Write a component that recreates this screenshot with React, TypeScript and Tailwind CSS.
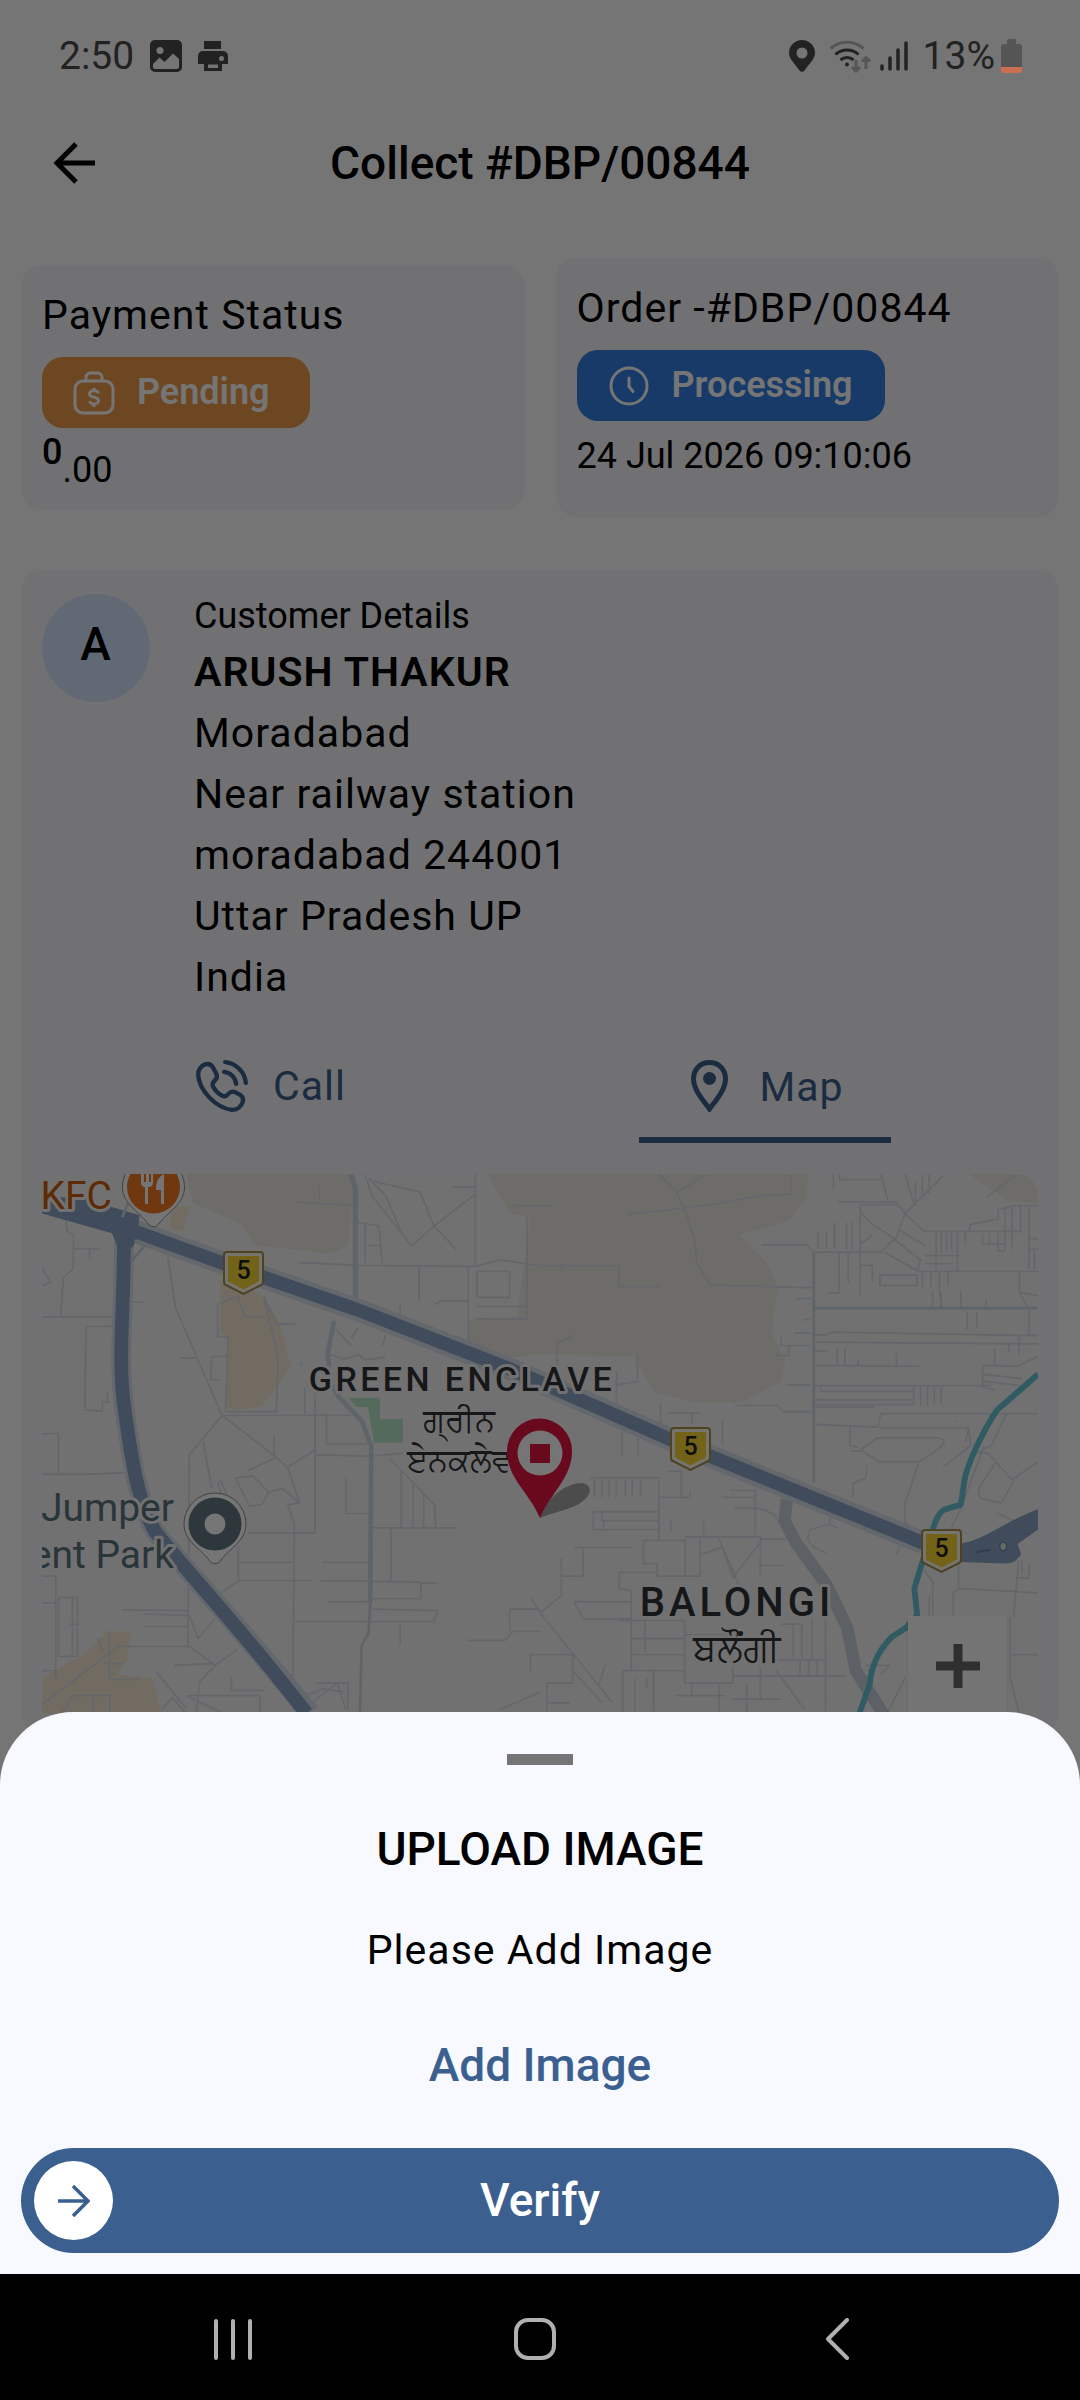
import type { ReactNode } from 'react'

const address = ['Moradabad', 'Near railway station', 'moradabad 244001', 'Uttar Pradesh UP', 'India']

function StatusBar() {
  return (
    <div className="relative z-20 flex h-[112px] items-center justify-between pl-[59px] pr-[58px] text-[39px] leading-[48px] text-[#222222]">
      <div className="flex items-center">
        <span>2:50</span>
        <svg viewBox="0 0 32 32" className="ml-4 size-8" aria-hidden="true">
          <path fillRule="evenodd" fill="currentColor" d="M5 0h22a5 5 0 0 1 5 5v22a5 5 0 0 1-5 5H5a5 5 0 0 1-5-5V5a5 5 0 0 1 5-5Zm5 7a3.5 3.5 0 1 0 0 7 3.500 3.500 0 0 0 0-7ZM3 24v3a2 2 0 0 0 2 2h22a2 2 0 0 0 2-2v-8l-6-5.500-8.500 8.500-5-4.500Z" />
        </svg>
        <svg viewBox="0 0 30 30" className="ml-4 size-[30px]" aria-hidden="true">
          <path fillRule="evenodd" fill="currentColor" d="M6 0h17v8H6ZM5 10h20a5 5 0 0 1 5 5v8h-6v7H6v-7H0v-8a5 5 0 0 1 5-5Zm18.500 5a2.500 2.500 0 1 0 0 5 2.500 2.500 0 0 0 0-5ZM10 23.500v3.500h10v-3.500Z" />
        </svg>
      </div>
      <div className="flex items-center">
        <svg viewBox="0 0 26 32" className="h-8 w-[26px]" aria-hidden="true">
          <path fillRule="evenodd" fill="currentColor" d="M13 0a13 13 0 0 1 13 13c0 6-6 11-10.500 17.500a3 3 0 0 1-5 0C6 24 0 19 0 13A13 13 0 0 1 13 0Zm0 7.500a5.500 5.500 0 1 0 0 11 5.500 5.500 0 0 0 0-11Z" />
        </svg>
        <svg viewBox="0 0 42 34" className="ml-[14px] h-[34px] w-[42px]" fill="none" strokeWidth="3" aria-hidden="true">
          <path d="M1.500 9.500a25 25 0 0 1 33 0" stroke="#555555" />
          <path d="M6.500 15.500a17 17 0 0 1 23 0M11.500 21a10 10 0 0 1 13 0" stroke="currentColor" />
          <circle cx="18" cy="25.500" r="2" fill="currentColor" />
          <path d="M27 21v11m-4-4 4 4 4-4M37 30V18.500m-4 4 4-4 4 4" stroke="#555555" />
        </svg>
        <svg viewBox="0 0 28 32" className="ml-[9px] h-8 w-7" stroke="currentColor" strokeWidth="3.500" strokeLinecap="round" aria-hidden="true">
          <path d="M2 26v3M10 18v11M18 10v19M26 3v26" />
        </svg>
        <span className="ml-[15px]">13%</span>
        <svg viewBox="0 0 21 34" className="ml-[6px] h-[34px] w-[21px]" aria-hidden="true">
          <path d="M6 1.500A1.500 1.500 0 0 1 7.500 0h6A1.500 1.500 0 0 1 15 1.500V5h3a3 3 0 0 1 3 3v20H0V8a3 3 0 0 1 3-3h3Z" fill="#555555" />
          <path d="M0 28h21v3a3 3 0 0 1-3 3H3a3 3 0 0 1-3-3Z" fill="#cc6e50" />
        </svg>
      </div>
    </div>
  )
}

function Badge({ className, icon, children }: { className: string; icon: ReactNode; children: ReactNode }) {
  return (
    <div className={`mt-[11px] flex h-[71px] w-fit min-w-[268px] items-center gap-[22px] rounded-[21px] pl-[31px] pr-8 text-[36px] font-semibold tracking-normal text-white ${className}`}>
      {icon}
      <span>{children}</span>
    </div>
  )
}

function MoneyBagIcon() {
  return (
    <svg viewBox="0 0 42 44" className="h-11 w-[42px]" fill="none" stroke="currentColor" strokeWidth="3" aria-hidden="true">
      <rect x="2" y="10" width="38" height="32" rx="8" />
      <path d="M13 10V6.500A4.500 4.500 0 0 1 17.500 2h7A4.500 4.500 0 0 1 29 6.500V10" />
      <path d="M25.500 22.500c-.5-2-2.500-3-4.500-3s-4.500 1-4.500 3.500c0 4.500 9 2 9 6.500 0 2.500-2.500 3.500-4.500 3.500s-4-1-4.500-3M21 17v3M21 33v3" />
    </svg>
  )
}

function ClockIcon() {
  return (
    <svg viewBox="0 0 42 42" className="size-[42px]" fill="none" stroke="currentColor" strokeWidth="3" strokeLinecap="round" aria-hidden="true">
      <circle cx="21" cy="21" r="18" />
      <path d="M21 13v8.500l4 5" />
    </svg>
  )
}

function Shield({ x, y }: { x: number; y: number }) {
  return (
    <g transform={`translate(${x} ${y})`}>
      <path d="M4 1h33a3 3 0 0 1 3 3v27a3 3 0 0 1-2 3l-17.500 9L3 34a3 3 0 0 1-2-3V4a3 3 0 0 1 3-3Z" fill="#fffdf0" stroke="#a8904a" strokeWidth="2" />
      <path d="M5 5h31v25.500l-15.500 8L5 30.500Z" fill="#fbd835" />
      <text x="20.500" y="28" textAnchor="middle" fontSize="25" fontWeight="500" fill="#222">5</text>
    </g>
  )
}

function MapView() {
  return (
    <div className="relative h-[560px] overflow-hidden rounded-tr-[21px] bg-[#f8f7f7]">
      <svg viewBox="0 0 996 560" preserveAspectRatio="xMidYMin slice" className="h-full w-full" role="img" aria-label="Map of Green Enclave and Balongi">
        <g transform="translate(-42 -14) scale(.3444 .3571)" fill="none" strokeLinejoin="round">
          {/* land use */}
          <path d="M540 30H1030L1010 240 960 262 740 240 700 180 560 120ZM1410 30H2350L2340 110 2290 170 2150 210 2230 290 2260 360 2240 480 2280 560 2270 620 2150 680H2020L1900 650 1840 550 1560 545 1470 555 1360 520V450L1500 440 1540 160 1480 150ZM2800 30H3020V125L2920 110Z" fill="#f0ece2" />
          <path d="M640 340H700L770 390 810 450 845 580 760 690 690 700 655 690 660 500 640 480ZM500 130H550L530 200 490 190ZM122 1450 250 1380 310 1320 380 1320 370 1400 340 1440 440 1450 470 1550H122Z" fill="#f7ead3" />
          <path d="M1012 666H1103V726H1170V792H1086L1068 692H1035Z" fill="#b7e6c8" />
          {/* side streets, west */}
          <g stroke="#d9dfe9" strokeWidth="5">
            <path d="M190 160 195 200 214 210 212 305 184 330 176 440M122 440H328M216 248H288M260 248V278M122 302 148 342 122 352M328 466H250L246 700 296 703 298 678H320M312 678V646M122 766H170V880M122 880 250 880 400 875M487 270 510 415 645 715 760 800 835 860M520 555H568M645 715H1020M645 715 550 825 546 1365M590 790 615 920M632 405 632 495H662L655 705H802L808 555 765 380M632 405 690 380 710 440H765M765 380 802 460H858M385 398H415M614 550H658M614 550 612 615H640M796 770V835L720 870M683 890 735 885 780 930 760 965 725 970 683 890M780 930 820 920 870 960 835 965M835 860 870 960M835 860 915 812M835 965 855 1020 850 1480M720 1045H912M915 640V1045M915 825 1070 830 1240 815M948 710V795H1070M1005 890V990H1068M1130 835 1262 965 1265 1028M1070 1030H1328M1135 1030V1180M1165 870V1028M1200 900V1028M1230 930V1028M935 1127H1070M695 1127H850M692 1080V1178H908M930 1178 1222 1182V1228H1080M950 1237H1070M855 1293H1260L1272 1262 1080 1258M1225 1185H1268M630 1220 692 1178M355 1260 545 1262M415 1272 548 1275M418 1307H545M345 1362H550L625 1415 690 1370M345 1362 122 1525M505 1415 620 1410M575 1340 625 1285M550 1275 575 1340M625 1415 580 1460 570 1550M640 895 660 940M632 900 650 960M122 1165H162V1455M122 1240H162M170 1225H225V1390H170ZM210 1225V1385M200 1300H222M318 1320V1455H405M300 1410H360M285 1340 300 1380M122 1430H160M270 1500H320V1550M180 1550 210 1500H270V1550M455 1435 540 1535M470 1540 500 1505 540 1550M540 1500H755V1550M650 1550 540 1500M672 1445V1485H770M885 1535 980 1465 1005 1540M920 1465H1010M930 1480 1000 1490" />
            <path d="M865 117 1025 128M928 80V120M870 287 1040 295 1380 298 1450 280 1568 296M1060 40 1080 100 1170 210M1085 60 1220 90 1260 185 1195 240 1168 208 1120 100 1070 50M1260 185 1375 100M1260 185 1325 250M1060 175V290M1040 175 1100 185 1110 290M1068 240H1100M1380 40V298M1315 75H1378M1360 298V525M1217 298V395M1162 405V440M1260 405 1280 395H1360M1385 312H1480V385H1385ZM1380 445H1530V160M1385 410H1530M1495 128H1568M970 470 1020 520M1040 470 1020 500M1110 520 1120 490M960 545 1000 558 1040 545 1060 560 1120 552M1225 470C1240 460 1260 465 1268 490M875 562V578M885 640V710M1162 1300V1355M1055 1345" />
            <path d="M1355 1345H1465L1490 1320H1568M1480 1320V1258H1568M1540 1430V1385H1568M1540 1228 1568 1265M1450 1540 1568 1490M1010 1465V1540M890 1500 940 1480" />
          </g>
          {/* side streets, east */}
          <g transform="translate(1568 0)" stroke="#d9dfe9" strokeWidth="5">
            <path d="M345 40 398 92 430 165 450 230 455 290 495 350 790 358M398 92 480 40M255 152 500 125 640 100 728 95V40M0 296H230V355H348M58 290 68 315M0 128H38M643 238H775L795 260M50 575V515L100 490M283 545V620L225 630M222 590V710M565 687H690L705 705H785M718 630H785M700 495V520H785M683 548H722V520M737 485H785M762 447H785M740 388H785M372 708H465M442 708V740M530 728V800M238 760V830M285 740V830M350 680V740" />
            <path d="M870 40V55H985M852 40V82M865 117H1040M990 40 1012 120M1060 40 1075 90 1085 120M1110 40V100M1130 40V95M1090 60V130M1170 45 1060 150 1035 215 990 258H790M930 125H1040L1065 155 1115 200H1400M930 125V380M807 198V250M832 198V250M855 175V250M890 175V250M905 175V250M930 145 965 180 1020 215 1105 280 1095 310 1000 258M1040 195 1120 240M930 235 965 210M868 260V372H835M895 260V345M930 295H965V340M987 322H1095V352H987ZM1095 312H1446M1110 315V355M1135 315V358M1160 315V385M1185 315V350M1212 200V310M1150 200V312M1165 200V258M1180 200V255M1195 200V252M1235 200V240M1118 268H1220M1118 290H1200M1245 200 1250 180 1330 165V140L1380 128H1446M1350 130V255M1370 130V250M1395 130V205M1420 130V305M1285 205V235H1350M1305 205V240M1330 205V255H1350M1420 220H1446M1420 250H1446M1435 255V305M1140 368V415M1165 368V415M1222 368V415M1295 390V415M1240 425V475M1268 425V470M1392 315V370L1420 420V490M1392 370 1446 380M1295 105 1385 40" />
            <path d="M790 490H830L850 482 1446 492M790 510 1446 515M790 535H835M863 525V575M885 525V575M790 575 1100 578M920 578 925 560M1035 540V578M1320 530V575M1362 515V540M1390 490V545M1446 550 1385 578 1285 575V635L1320 645M1285 600 1400 612M1290 620 1395 632M790 632H1310M1085 632V685H790M815 632V648H1085M790 672H1085M1105 635V688M1125 635V688M1145 635V688M1165 635V688M790 692H970M790 740 980 748 990 710H1446M900 748V800L925 805M900 815H935L985 845 1100 845C1180 800 1190 780 1150 778H980L930 812M985 750H1245L1235 790M1210 735V728M1245 750 1250 800 1170 860M1100 845 1075 920 1060 960V1015L1100 1050M908 945 910 905 945 890 950 855M842 990V1020L785 1035C770 1060 775 1080 830 1100M842 1020 865 1032M1035 1105 1060 1045M1355 710 1310 800 1270 820 1300 820M1300 820 1370 895 1446 845M1325 845 1280 910C1260 950 1280 950 1340 960L1375 900M1290 800 1220 980 1190 1040M1325 988 1375 1010" />
            <path d="M145 890H345V1065M158 890V945M180 895V945M200 895V945M222 895V945M248 895V940M268 895V940M292 895V940M345 945H430M410 870V945M370 872H408M435 930V948M155 985H345M155 985V1035H345M180 985V1010H345M185 1010V1035M550 925H625V1050M530 945H620M565 975H625M625 975C680 980 700 1010 715 1050M380 1040V1010M475 1010V1050M422 1055H640V1168M422 1055V1165M640 1062H715M300 1065H422M300 1065V1130H340V1165H422M465 1060V1165H422M465 1105 530 1085 560 1150 580 1200M520 1060 560 1170 640 1070M635 1135H710M230 1155H335M230 1155V1200L265 1205M100 1085H270M125 1085V1165H62V1220L0 1268M62 1165V1115M100 1237H265M100 1237 125 1285H265M0 1268 210 1520M265 1205V1430M230 1290H420V1465M265 1340H420M305 1290V1380M265 1385H420M0 1385H95V1465H20V1545M95 1430 180 1520M190 1415 170 1470M240 1430H420M240 1430V1545M275 1450V1545M310 1450V1480M330 1430V1545M420 1330H560M395 1500H540M420 1465H560M440 1465V1500M520 1470V1545M560 1345V1465M560 1445H890M700 1300H760V1395M735 1300V1395M790 1285V1395M829 1395V1545M660 1400H829M829 1285V1395M685 1430 770 1540M640 1420V1510M755 1400V1445M780 1400V1445M805 1400V1445M560 1510H700M600 1465V1545M20 1520H88M945 1415H1015L990 1440M950 1430 970 1420M1060 1450 1010 1545M1200 1275V1210L1220 1200 1446 1212M1215 1120V1200M1130 1220V1280M1115 1150 1140 1180V1275M1390 1120 1375 1280M1390 1170H1420V1130M1365 1385H1446M1365 1280V1450L1390 1545M1400 1120V1160" />
          </g>
          {/* secondary roads */}
          <g stroke="#d0d9e5">
            <path d="M1018 40 1032 80V395" strokeWidth="16" />
            <path d="M970 450 952 540 956 620 985 665 1050 730 1078 800 1075 1240" strokeWidth="14" />
            <path d="M1075 1240 1070 1325 1050 1360 1045 1550M2363 905V260M2363 415H3014" strokeWidth="8" />
            <path d="M2285 950 2278 1010 2310 1070 2400 1190 2460 1310 2485 1430 2570 1560" strokeWidth="36" stroke="#cbd3df" />
          </g>
          {/* river */}
          <path d="M3014 600 2895 700C2850 765 2805 860 2800 900L2790 965 2740 980C2710 1000 2705 1060 2680 1120L2655 1200 2663 1275 2630 1310 2590 1335C2545 1380 2530 1420 2525 1470L2495 1550" stroke="#6bc6d6" strokeWidth="17" />
          {/* highways */}
          <path d="M350 185 650 290 1040 420 1480 585 2000 805 2680 1072" stroke="#dbe1ea" strokeWidth="64" />
          <path d="M360 220C362 400 340 560 362 700 385 860 400 950 450 1040 530 1140 690 1300 900 1550" stroke="#dbe1ea" strokeWidth="58" />
          <path d="M122 120 350 185 650 290 1040 420 1480 585 2000 805 2680 1072" stroke="#8ba5c9" strokeWidth="38" />
          <path d="M360 200C362 400 340 560 362 700 385 860 400 950 450 1040 530 1140 690 1300 890 1550" stroke="#8ba5c9" strokeWidth="40" />
          <path d="M122 100 250 110 405 155 400 215 385 245 340 240 325 205 122 150ZM2560 1025 2680 1072 2780 1075C2850 1070 2900 1020 3014 978V1035L2955 1075 2965 1105C2950 1125 2940 1130 2915 1130L2790 1126 2670 1088Z" fill="#8ba5c9" />
          <ellipse cx="2913" cy="1082" rx="10" ry="12" fill="#d3ece0" stroke="#7088a8" strokeWidth="4" />
          <path d="M2835 1098 2875 1092" stroke="#7088a8" strokeWidth="6" />
          <path d="M390 225 420 240 380 285M355 160 372 120" stroke="#d0d9e5" strokeWidth="8" />
        </g>

        <Shield x={181} y={77} />
        <Shield x={628} y={253} />
        <Shield x={879} y={355} />

        <g stroke="#f8f7f7" strokeWidth="6" strokeLinejoin="round" paintOrder="stroke">
          <g fontSize="39" textAnchor="end">
            <text x="70" y="35" fill="#cb5c0c">KFC</text>
            <g fill="#5d747f">
              <text x="132" y="347">Jumper</text>
              <text x="132" y="394">ent Park</text>
            </g>
          </g>
          <g fill="#303437" fontWeight="500" textAnchor="middle">
            <text x="420" y="217" fontSize="34" className="tracking-widest">GREEN ENCLAVE</text>
            <text x="695" y="442" fontSize="40" className="tracking-widest">BALONGI</text>
          </g>
          <g fill="#303437" textAnchor="middle" fontSize="32" fontWeight="500">
            <text x="417" y="257">ਗ੍ਰੀਨ</text>
            <text x="417" y="297">ਏਨਕਲੇਵ</text>
            <text x="694" y="487" fontSize="38">ਬਲੌਂਗੀ</text>
          </g>
        </g>

        {/* restaurant */}
        <path d="M80.500 13a31 31 0 1 1 62 0c0 17-16 24-25 36-3 5-9 5-12 0-9-12-25-19-25-36Z" fill="#fff" stroke="#8f8f8f" />
        <circle cx="111.500" cy="13" r="26.500" fill="#f37a1f" />
        <path d="M99 0v8c0 4 2 5 4 5v17h3V13c3 0 5-1 5-5V0h-2v8h-2V0h-3v8h-2V0ZM122 0c-6 3-8 8-8 16h5v14h3Z" fill="#fff" />
        {/* park */}
        <path d="M142 350a31 31 0 1 1 62 0c0 17-16 24-25 36-3 5-9 5-12 0-9-12-25-19-25-36Z" fill="#fff" stroke="#8f8f8f" />
        <circle cx="173" cy="350" r="18.500" fill="none" stroke="#647a84" strokeWidth="16" />
        {/* destination */}
        <path d="M498 344C505 322 525 309 540 309c12 2 10 14-5 22-10 5-25 8-37 13Z" fill="#7a7a7a" opacity=".65" />
        <path d="M498 344C487 318 465 304 465 277a32.500 32.500 0 1 1 65 0c0 27-21 41-32 67Z" fill="#e5143f" />
        <circle cx="498" cy="279" r="22.500" fill="#fff" />
        <path d="M488 270h20v19h-20Z" fill="#e5143f" />
      </svg>
      <button type="button" aria-label="Zoom in" className="absolute right-[31px] top-[442px] flex h-[118px] w-[99px] justify-center bg-[#fdfdfd] pt-7 text-[#666666] shadow-sm">
        <svg viewBox="0 0 44 44" className="size-11" aria-hidden="true">
          <path d="M22 0v44M0 22h44" stroke="currentColor" strokeWidth="9" />
        </svg>
      </button>
    </div>
  )
}

function OrderPage() {
  return (
    <main className="px-[21px] text-[41px] leading-[61px] tracking-wide">
      <header className="grid h-[102px] grid-cols-[1fr_auto_1fr] items-center tracking-normal">
        <button type="button" aria-label="Back" className="ml-8 w-fit">
          <svg viewBox="0 0 42 42" className="size-[42px]" fill="none" stroke="currentColor" strokeWidth="5" aria-hidden="true">
            <path d="M42 21H4M23 2 4 21l19 19" />
          </svg>
        </button>
        <h1 className="text-[46px] font-medium">Collect #DBP/00844</h1>
      </header>

      <div className="mt-11 grid grid-cols-2 items-center gap-[31px]">
        <section className="rounded-[21px] bg-[#f6f6fa] px-[21px] py-5">
          <h2>Payment Status</h2>
          <Badge className="bg-[#ed9a4a]" icon={<MoneyBagIcon />}>Pending</Badge>
          <div className="flex h-[62px] text-[36px] tracking-normal">
            <span className="self-start font-medium leading-[48px]">0</span>
            <span className="self-end leading-[40px]">.00</span>
          </div>
        </section>
        <section className="rounded-[21px] bg-[#f6f6fa] px-[21px] py-5">
          <h2>Order -#DBP/00844</h2>
          <Badge className="bg-[#327ee4]" icon={<ClockIcon />}>Processing</Badge>
          <p className="mb-[14px] mt-2 text-[36px] leading-[54px] tracking-normal">24 Jul 2026 09:10:06</p>
        </section>
      </div>

      <section className="mt-[53px] rounded-[21px] bg-[#f6f6fa] px-[21px] pt-5">
        <div className="flex gap-11">
          <div className="mt-1 flex size-[108px] shrink-0 items-center justify-center rounded-full bg-[#d3e4ff] pb-2 text-[46px] font-medium">A</div>
          <div className="flex-1">
            <p className="text-[36px] leading-[52px] tracking-normal">Customer Details</p>
            <h2 className="font-semibold">ARUSH THAKUR</h2>
            {address.map(line => <p key={line}>{line}</p>)}
          </div>
        </div>
        <div className="ml-[152px] mt-[52px] flex pr-[147px] text-[#3b608f]">
          <div className="flex flex-1 items-start">
            <button type="button" className="flex h-[52px] items-center gap-[25px] leading-[55px]">
              <svg viewBox="0 0 24 24" className="ml-[2px] size-[52px]" fill="none" stroke="currentColor" strokeWidth="2" strokeLinecap="round" strokeLinejoin="round" aria-hidden="true">
                <path d="M21.500 19.500c-.6 2-2.500 3.500-5 3.500C9 22 1.500 14 1 7c0-2.500 1.200-4.200 3.200-5 1.600-.5 3 .2 3.800 1.700l1.300 2.500c.7 1.300.3 2.500-.8 3.400-1 .9-1.200 1.700-.5 2.900.9 1.700 2.500 3.200 4.100 4 1.100.5 2 .2 2.800-.8.9-1.100 2-1.400 3.300-.8l2 1.100c1.400.8 1.800 2 1.300 3.500Z" />
                <path d="M13 5.500c3 .3 5.200 2.500 5.500 5.500M13.500 1c5 .5 9 4.500 9.500 9.500" />
              </svg>
              Call
            </button>
          </div>
          <button type="button" className="flex h-[83px] w-[252px] justify-center gap-[18px] border-b-[6px] border-[#3b608f] pr-2 leading-[55px]">
            <svg viewBox="0 0 63 52" className="h-[52px] w-[63px]" aria-hidden="true">
              <path d="M31.500 2.500c9.500 0 16 7 16 16.500 0 10-8.500 20-16 30-7.500-10-16-20-16-30 0-9.500 6.500-16.500 16-16.500Z" fill="none" stroke="currentColor" strokeWidth="5" />
              <circle cx="31.500" cy="18.500" r="6.500" fill="currentColor" />
            </svg>
            Map
          </button>
        </div>
        <div className="mt-[31px] tracking-normal"><MapView /></div>
      </section>
    </main>
  )
}

function UploadSheet() {
  return (
    <section role="dialog" aria-label="Upload image" className="absolute inset-x-0 bottom-0 z-20 flex flex-col items-center rounded-t-[73px] bg-[#f7f9fe] px-[21px] pb-[21px] pt-[42px]">
      <div className="h-[11px] w-[66px] bg-[#757575]" />
      <h2 className="mt-[54px] text-[46px] font-medium leading-[60px]">UPLOAD IMAGE</h2>
      <p className="mt-[41px] text-[41px] leading-[60px] tracking-wide">Please Add Image</p>
      <button type="button" className="mt-[55px] text-[46px] font-medium leading-[60px] text-[#3b608f]">Add Image</button>
      <button type="button" className="relative mt-[53px] flex h-[105px] w-full items-center justify-center rounded-full bg-[#3b608f] text-[46px] font-medium text-white">
        <span className="absolute left-[13px] flex size-[79px] items-center justify-center rounded-full bg-white text-[#3b608f]">
          <svg viewBox="0 0 32 32" className="size-8" fill="none" stroke="currentColor" strokeWidth="3.500" aria-hidden="true">
            <path d="M0 16h30M15 1l15 15-15 15" />
          </svg>
        </span>
        Verify
      </button>
    </section>
  )
}

function NavBar() {
  return (
    <nav className="grid h-[126px] shrink-0 grid-cols-3 bg-black pl-[82px] pr-[92px] pt-[3px] text-[#b0b0b0]">
      <button type="button" aria-label="Recent apps" className="flex items-center justify-center">
        <svg viewBox="0 0 42 42" className="size-[42px]" stroke="currentColor" strokeWidth="4" strokeLinecap="round" aria-hidden="true"><path d="M4 3v37M21 3v37M38 3v37" /></svg>
      </button>
      <button type="button" aria-label="Home" className="flex items-center justify-center">
        <svg viewBox="0 0 42 42" className="size-[42px]" fill="none" stroke="currentColor" strokeWidth="4" aria-hidden="true"><rect x="2" y="2" width="38" height="38" rx="12" /></svg>
      </button>
      <button type="button" aria-label="Back" className="flex items-center justify-center">
        <svg viewBox="0 0 42 42" className="size-[42px]" fill="none" stroke="currentColor" strokeWidth="4" strokeLinecap="round" strokeLinejoin="round" aria-hidden="true"><path d="M31 2 12 21l19 19" /></svg>
      </button>
    </nav>
  )
}

export default function App() {
  return (
    <div className="flex h-screen flex-col font-[Roboto,sans-serif] text-black">
      <div className="relative min-h-0 flex-1 overflow-hidden bg-white">
        <StatusBar />
        <OrderPage />
        <div className="absolute inset-0 z-10 bg-black/54" />
        <UploadSheet />
      </div>
      <NavBar />
    </div>
  )
}
